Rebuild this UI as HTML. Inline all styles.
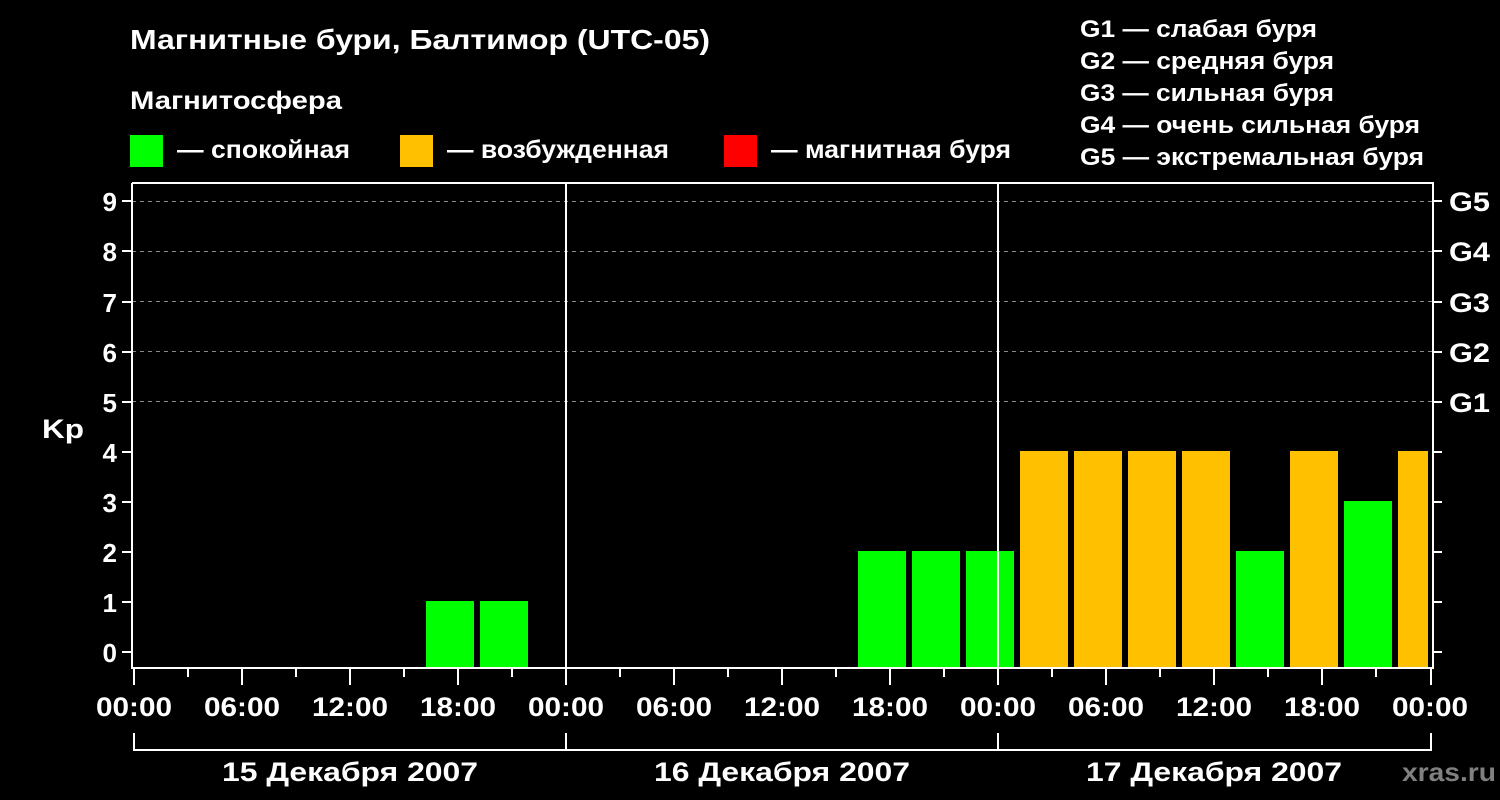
<!DOCTYPE html>
<html><head><meta charset="utf-8"><style>
html,body{margin:0;padding:0;background:#000;}
svg{display:block;}
text{font-family:"Liberation Sans",Arial,sans-serif;font-weight:bold;fill:#fff;}
</style></head><body>
<svg width="1500" height="800" viewBox="0 0 1500 800" xmlns="http://www.w3.org/2000/svg">
<rect width="1500" height="800" fill="#000"/>
<text x="130" y="49" font-size="28" textLength="580" lengthAdjust="spacingAndGlyphs">Магнитные бури, Балтимор (UTC-05)</text>
<text x="130" y="109" font-size="25" textLength="212" lengthAdjust="spacingAndGlyphs">Магнитосфера</text>
<rect x="130" y="135" width="33" height="32" fill="#00ff00"/>
<text x="177" y="158" font-size="25" textLength="173" lengthAdjust="spacingAndGlyphs">— спокойная</text>
<rect x="400" y="135" width="33" height="32" fill="#ffc000"/>
<text x="447" y="158" font-size="25" textLength="222" lengthAdjust="spacingAndGlyphs">— возбужденная</text>
<rect x="724" y="135" width="33" height="32" fill="#ff0000"/>
<text x="771" y="158" font-size="25" textLength="240" lengthAdjust="spacingAndGlyphs">— магнитная буря</text>
<g font-size="24">
<text x="1080" y="37" textLength="237" lengthAdjust="spacingAndGlyphs">G1 — слабая буря</text>
<text x="1080" y="69" textLength="254" lengthAdjust="spacingAndGlyphs">G2 — средняя буря</text>
<text x="1080" y="101" textLength="254" lengthAdjust="spacingAndGlyphs">G3 — сильная буря</text>
<text x="1080" y="133" textLength="340" lengthAdjust="spacingAndGlyphs">G4 — очень сильная буря</text>
<text x="1080" y="165" textLength="344" lengthAdjust="spacingAndGlyphs">G5 — экстремальная буря</text>
</g>
<g stroke="#888" stroke-width="1" stroke-dasharray="4,4">
<line x1="132" x2="1432" y1="201.5" y2="201.5"/>
<line x1="132" x2="1432" y1="251.5" y2="251.5"/>
<line x1="132" x2="1432" y1="301.5" y2="301.5"/>
<line x1="132" x2="1432" y1="351.5" y2="351.5"/>
<line x1="132" x2="1432" y1="401.5" y2="401.5"/>
</g>
<g>
<rect x="426" y="601" width="48" height="67" fill="#00ff00"/>
<rect x="480" y="601" width="48" height="67" fill="#00ff00"/>
<rect x="858" y="551" width="48" height="117" fill="#00ff00"/>
<rect x="912" y="551" width="48" height="117" fill="#00ff00"/>
<rect x="966" y="551" width="48" height="117" fill="#00ff00"/>
<rect x="1020" y="451" width="48" height="217" fill="#ffc000"/>
<rect x="1074" y="451" width="48" height="217" fill="#ffc000"/>
<rect x="1128" y="451" width="48" height="217" fill="#ffc000"/>
<rect x="1182" y="451" width="48" height="217" fill="#ffc000"/>
<rect x="1236" y="551" width="48" height="117" fill="#00ff00"/>
<rect x="1290" y="451" width="48" height="217" fill="#ffc000"/>
<rect x="1344" y="501" width="48" height="167" fill="#00ff00"/>
<rect x="1398" y="451" width="30" height="217" fill="#ffc000"/>
</g>
<g stroke="#fff" stroke-width="2" fill="none">
<polyline points="132,183 1433,183 1433,668 132,668 132,183"/>
<line x1="566" y1="183" x2="566" y2="685"/>
<line x1="998" y1="183" x2="998" y2="685"/>
<line x1="134" y1="668" x2="134" y2="685"/>
<line x1="1431" y1="668" x2="1431" y2="685"/>
</g>
<g stroke="#fff" stroke-width="2">
<path d="M188 668v9M242 668v17M296 668v9M350 668v17M404 668v9M458 668v17M512 668v9
M620 668v9M674 668v17M728 668v9M782 668v17M836 668v9M890 668v17M944 668v9
M1052 668v9M1106 668v17M1160 668v9M1214 668v17M1268 668v9M1322 668v17M1376 668v9"/>
<path d="M122 652h10M122 602h10M122 552h10M122 502h10M122 452h10M122 402h10M122 352h10M122 302h10M122 251h10M122 201h10
M1433 652h9M1433 602h9M1433 552h9M1433 502h9M1433 452h9M1433 402h9M1433 352h9M1433 302h9M1433 251h9M1433 201h9"/>
<path d="M134 733v17h1297v-17M566 733v17M998 733v17" fill="none"/>
</g>
<g font-size="26" text-anchor="end">
<text x="117" y="662">0</text><text x="117" y="612">1</text><text x="117" y="562">2</text>
<text x="117" y="512">3</text><text x="117" y="462">4</text><text x="117" y="412">5</text>
<text x="117" y="362">6</text><text x="117" y="312">7</text><text x="117" y="261">8</text>
<text x="117" y="211">9</text>
</g>
<text x="42" y="438" font-size="27" textLength="42" lengthAdjust="spacingAndGlyphs">Kp</text>
<g font-size="27">
<text x="1449" y="211" textLength="41" lengthAdjust="spacingAndGlyphs">G5</text>
<text x="1449" y="261" textLength="41" lengthAdjust="spacingAndGlyphs">G4</text>
<text x="1449" y="312" textLength="41" lengthAdjust="spacingAndGlyphs">G3</text>
<text x="1449" y="362" textLength="41" lengthAdjust="spacingAndGlyphs">G2</text>
<text x="1449" y="412" textLength="41" lengthAdjust="spacingAndGlyphs">G1</text>
</g>
<g font-size="27">
<text x="96" y="716" textLength="76" lengthAdjust="spacingAndGlyphs">00:00</text>
<text x="204" y="716" textLength="76" lengthAdjust="spacingAndGlyphs">06:00</text>
<text x="312" y="716" textLength="76" lengthAdjust="spacingAndGlyphs">12:00</text>
<text x="420" y="716" textLength="76" lengthAdjust="spacingAndGlyphs">18:00</text>
<text x="528" y="716" textLength="76" lengthAdjust="spacingAndGlyphs">00:00</text>
<text x="636" y="716" textLength="76" lengthAdjust="spacingAndGlyphs">06:00</text>
<text x="744" y="716" textLength="76" lengthAdjust="spacingAndGlyphs">12:00</text>
<text x="852" y="716" textLength="76" lengthAdjust="spacingAndGlyphs">18:00</text>
<text x="960" y="716" textLength="76" lengthAdjust="spacingAndGlyphs">00:00</text>
<text x="1068" y="716" textLength="76" lengthAdjust="spacingAndGlyphs">06:00</text>
<text x="1176" y="716" textLength="76" lengthAdjust="spacingAndGlyphs">12:00</text>
<text x="1284" y="716" textLength="76" lengthAdjust="spacingAndGlyphs">18:00</text>
<text x="1392" y="716" textLength="76" lengthAdjust="spacingAndGlyphs">00:00</text>
<text x="222" y="781" textLength="256" lengthAdjust="spacingAndGlyphs">15 Декабря 2007</text>
<text x="654" y="781" textLength="256" lengthAdjust="spacingAndGlyphs">16 Декабря 2007</text>
<text x="1086" y="781" textLength="256" lengthAdjust="spacingAndGlyphs">17 Декабря 2007</text>
</g>
<text x="1402" y="781" font-size="26" textLength="94" lengthAdjust="spacingAndGlyphs" style="fill:#808080">xras.ru</text>
</svg>
</body></html>
